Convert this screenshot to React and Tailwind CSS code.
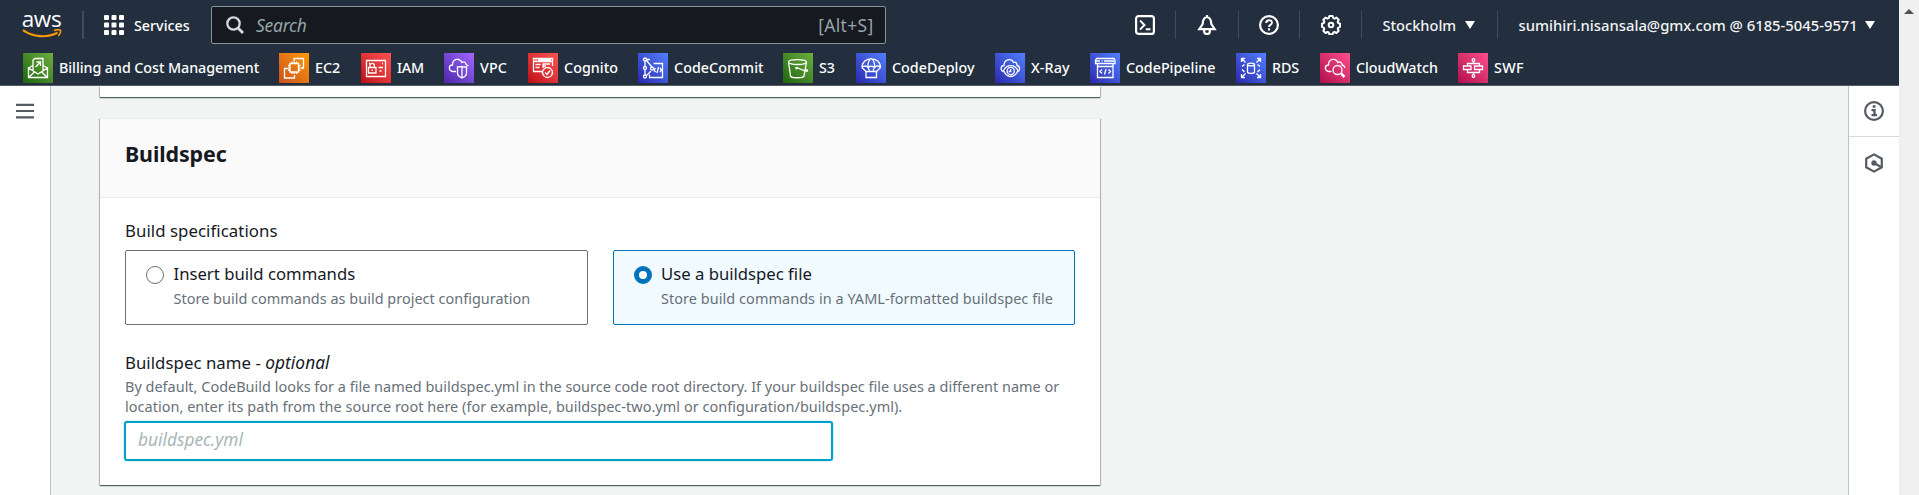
import React from "react";

const GRADIENTS = {
  green: "from-[#1b660f] to-[#6cae3e]",
  orange: "from-[#c8511b] to-[#ff9900]",
  red: "from-[#bd0816] to-[#ff5252]",
  purple: "from-[#4d27a8] to-[#a166ff]",
  blue: "from-[#2e27ad] to-[#527fff]",
  pink: "from-[#b0084d] to-[#ff4f8b]",
};

const SERVICES = [
  {
    name: "Billing and Cost Management", color: "green", width: "w-[256px]", text: "tracking-[-0.06px]",
    icon: <path d="M10 17V7l2-1.500h8V17M5.500 15v9.500h19V15L15 21zM5.500 24.500l6-5.500M24.500 24.500l-6-5.500M10 12.500L5.500 15M20 12.500l4.500 2.500M12.500 14l4.500-4.500M13.500 9h4v4" />,
  },
  {
    name: "EC2", color: "orange", width: "w-[82px]", text: "tracking-[0px]",
    icon: <path d="M15 8V5.500h9.500v9.500H22M9 15.500H5.500v9.500h10v-3M11 10.500h8.500v8.500H11zM13 8.500v2M15.200 8.500v2M17.500 8.500v2M13 19v2M15.200 19v2M17.500 19v2M9 12.500h2M9 14.800h2M9 17h2M19.500 12.500h2M19.500 14.800h2M19.500 17h2" />,
  },
  {
    name: "IAM", color: "red", width: "w-[83px]", text: "tracking-[-0.2px]",
    icon: <path d="M5.500 7.500h19v16h-19zM8 10.500h1M21 10.500h1M7.500 14.500h7.500v5.500H7.500zM9 14.500v-2a2.200 2.200 0 0 1 4.400 0v2M11.200 16.500v1.500M17.500 14.500h4.500M18.500 18h2" />,
  },
  {
    name: "VPC", color: "purple", width: "w-[84px]", text: "tracking-[0.1px]",
    icon: <path d="M12 18.500H9C4 17.500 4.500 12 8.500 12C8.500 5.500 16 4.500 18 9.500C20 8 22 9.500 22 11.500L24.500 13M18 13.500c2 .8 3.500 .500 4.500 .300V20c0 2.500-2 4-4.500 5c-2.500-1-4.500-2.500-4.500-5v-6.200c1.500 .2 3 0 4.500-.300zM18 13.500V25" />,
  },
  {
    name: "Cognito", color: "red", width: "w-[110px]", text: "tracking-[0.05px]",
    icon: <path d="M14 18.500H5.500v-13h19V13M5.500 8.500h19M7.500 7h1M10 7h13M7.500 11.500h5M7.500 14.500h4M15 15v-4h7M15 13h3M19.500 14.500a5 5 0 1 1-.01 0zM17 19.500l2 2l3-4" />,
  },
  {
    name: "CodeCommit", color: "blue", width: "w-[145px]", text: "tracking-[0.05px]",
    icon: (
      <>
        <path d="M7 8v5M7 17v5M8 7l6 7M8 23l5-5M9 8.500v-2h3M15.500 10.500h9v14h-13v-3M17.500 15l-1.500 2l1.500 2M22 15l1.500 2l-1.500 2M20.500 14l-1.500 6" />
        <circle cx="7" cy="6.500" r="1.500" /><circle cx="7" cy="15" r="1.500" /><circle cx="7" cy="23.500" r="1.500" /><circle cx="14" cy="15.500" r="1.500" />
      </>
    ),
  },
  {
    name: "S3", color: "green", width: "w-[73px]", text: "tracking-[0px]",
    icon: <path d="M5.500 9c0-3.300 18-3.300 18 0s-18 3.300-18 0l2 14c.5 2.300 13 2.300 13.500 0l2.500-14M14 14.500c4 2 8 4 10.500 3.500c.5-.8-1-1.500-2.500-2.200M13.500 14.300a.8 .8 0 1 0 .01 0z" />,
  },
  {
    name: "CodeDeploy", color: "blue", width: "w-[139px]", text: "tracking-[0.03px]",
    icon: <path d="M6 14.500C6 3 24.500 3 24.500 14.500L20.500 18.500M6 14.500l4 4M6 14.500c2-2 4-2 6 0c2-1.500 4.500-1.500 6.500 0c2-2 4-2 6 0M12 14.500c-.5-4 1-8 3.200-9c2.300 1 3.800 5 3.300 9M12 14.500l1.500 3M18.500 14.500l-1.500 3M10 18.500h10.500v6H10z" />,
  },
  {
    name: "X-Ray", color: "blue", width: "w-[95px]", text: "tracking-[0.1px]",
    icon: (
      <>
        <path d="M8.500 18.500C5 18 5.500 12.500 9 12.500C9 6 16.500 5 18.500 9.500C21 8.500 22 10 22 12.500C25.500 13 25 18 22.800 18.500" />
        <path d="M8.500 17.500c3.500-6.500 11-6.500 14.500 0c-3.500 8-11 8-14.500 0z" />
        <circle cx="15.700" cy="18" r="3.600" /><path d="M15.700 16v2.500h-2" />
      </>
    ),
  },
  {
    name: "CodePipeline", color: "blue", width: "w-[146px]", text: "tracking-[0px]",
    icon: <path d="M6.500 5.500h17.500l1 2v3h-19.500v-3zM6 8h4M11.500 8h1M14 8h10M7.500 10.500v14h15.500v-14M7.500 13.500h15.500M12 16.500l-2 2l2 2M18.500 16.500l2 2l-2 2M16 16l-1.500 5.500" />,
  },
  {
    name: "RDS", color: "blue", width: "w-[84px]", text: "tracking-[-0.1px]",
    icon: <path d="M5.500 9V5.500h3.500M5.500 5.500l4 4M21 5.500h3.500V9M24.500 5.500l-4 4M5.500 21v3.500h3.500M5.500 24.500l4-4M24.500 21v3.500H21M24.500 24.500l-4-4M11.500 11.500c0-1.800 7-1.800 7 0s-7 1.800-7 0v7.500c0 1.800 7 1.800 7 0v-7.500M8.500 11.500l-2.500 2M6 16.500l2.500 2.500M21.500 11.500l2.500 2M24 16.500l-2.500 2.500" />,
  },
  {
    name: "CloudWatch", color: "pink", width: "w-[138px]", text: "tracking-[-0.05px]",
    icon: (
      <>
        <path d="M11.500 18.500H9C4 17.500 4.500 12 8.500 12C8.500 5.500 16 4.500 18 9.500C20.500 8 22 10 22 12C24 12.300 25 14 24.500 15" />
        <circle cx="17.500" cy="17" r="4.500" /><path d="M20.500 20.500l3 3.500l1-1l-3.200-3.300" />
      </>
    ),
  },
  {
    name: "SWF", color: "pink", width: "w-[80px]", text: "tracking-[0.4px]",
    icon: (
      <>
        <path d="M15.500 8.500v2M9.500 13v-2.500h12V13M5.500 13h7.500v3.500H5.500zM16.500 13h8v3.500h-8zM9.500 16.500v3h12v-3M15.500 19.500v2" />
        <circle cx="15.500" cy="7" r="1.300" /><circle cx="15.500" cy="23" r="1.300" />
      </>
    ),
  },
];

function Divider({ className }) {
  return <span className={`h-7 w-px shrink-0 bg-[#414d5c] ${className}`} />;
}

function Caret({ className }) {
  return (
    <svg viewBox="0 0 10 8" className={`h-2 w-2.5 shrink-0 ${className}`} fill="#fff">
      <path d="M0 0h10L5 8z" />
    </svg>
  );
}

function ToolIcon({ className, children }) {
  return (
    <svg viewBox="0 0 20 20" fill="none" stroke="#fff" strokeWidth="2.200" className={`size-5 shrink-0 ${className}`}>
      {children}
    </svg>
  );
}

function AwsLogo() {
  return (
    <div className="flex w-10 shrink-0 flex-col items-center pb-[2px]">
      <span className="h-[19px] font-['Open_Sans',sans-serif] text-[22.500px] leading-[17px] font-medium tracking-[-0.4px] text-white">aws</span>
      <svg viewBox="0 0 40 10" className="h-2.5 w-10" fill="none" stroke="#ff9900">
        <path d="M1 1.200C11 8.500 25 9 35.500 3.800" strokeWidth="2.200" />
        <path d="M32 1.500c3-1 5.500-.9 6.300-.3c.5 1-.2 3.800-2 5.800" strokeWidth="1.500" />
      </svg>
    </div>
  );
}

function TopBar() {
  return (
    <div className="flex h-[50px] items-center pl-[21.500px]">
      <AwsLogo />
      <span className="ml-5 h-7 w-0.5 shrink-0 bg-[#414d5c]" />
      <svg viewBox="0 0 20 20" className="ml-5 size-5 shrink-0" fill="#fff">
        {[0, 7.5, 15].map((y) => [0, 7.5, 15].map((x) => <rect key={`${x}-${y}`} x={x} y={y} width="5" height="5" rx="1" />))}
      </svg>
      <span className="ml-[10.500px] w-[77px] shrink-0 pt-px text-[14.300px] font-medium text-white">Services</span>
      <div className="flex h-[38px] w-[675px] shrink-0 items-center rounded-[2px] border border-[#879596] bg-[#16191f] pr-[11.500px] pl-3.5 text-[#95a5a6]">
        <svg viewBox="0 0 18 18" className="size-[18px]" fill="none" stroke="#d5dbdb" strokeWidth="2.300">
          <circle cx="7.500" cy="7.500" r="6.200" />
          <path d="M12 12l5 5" strokeWidth="2.800" />
        </svg>
        <span className="ml-3 text-[17.400px] tracking-[-0.2px] italic">Search</span>
        <span className="ml-auto text-[17.400px] tracking-[0.35px]">[Alt+S]</span>
      </div>
      <ToolIcon className="ml-[248.500px]">
        <rect x="1.100" y="1.100" width="17.800" height="17.800" rx="2.500" />
        <path d="M5 5.500l4.500 4.500L5 14.500M10.800 14.200h4.700" strokeWidth="1.900" />
      </ToolIcon>
      <Divider className="ml-5" />
      <ToolIcon className="ml-[21px]">
        <path d="M10 2C6.500 2.500 5.800 5 5.700 9L2.300 14.200h15.400L14.300 9C14.200 5 13.500 2.500 10 2zM10 0v2" />
        <path d="M7.200 15v1.500a2.800 2.500 0 0 0 5.600 0V15" />
      </ToolIcon>
      <Divider className="ml-[21px]" />
      <ToolIcon className="ml-5">
        <circle cx="10" cy="10" r="8.900" />
        <path d="M7.200 8c0-3.800 5.800-3.500 5.700-.3c0 2.200-2.900 2.100-2.900 4.200" strokeWidth="1.900" />
        <path d="M10 13.300v2.200" strokeWidth="2.200" />
      </ToolIcon>
      <Divider className="ml-5" />
      <ToolIcon className="ml-[21px]">
        <path d="M8.400 1.100h3.200l.7 2l1.200.5l2-1l2.200 2.200l-1 2l.5 1.200l1.800.7v3.200l-1.800.7l-.5 1.200l1 2l-2.200 2.200l-2-1l-1.200.5l-.7 1.800H8.400l-.7-1.800l-1.200-.5l-2 1l-2.200-2.200l1-2l-.5-1.200l-1.800-.7V8.700l1.800-.7l.5-1.200l-1-2l2.200-2.200l2 1l1.200-.5z" strokeLinejoin="round" strokeWidth="2" />
        <circle cx="10" cy="10" r="2.300" strokeWidth="2" />
      </ToolIcon>
      <Divider className="ml-5" />
      <span className="ml-[21px] w-[74px] shrink-0 pt-px text-[14.600px] font-medium whitespace-nowrap text-[#f2f3f3]">Stockholm</span>
      <Caret className="ml-[8px]" />
      <Divider className="ml-[22px]" />
      <span className="ml-[21px] w-[339px] shrink-0 pt-px text-[14.800px] font-medium whitespace-nowrap text-[#f2f3f3]">
        sumihiri.nisansala@gmx.com @ 6185-5045-9571
      </span>
      <Caret className="ml-[7px]" />
    </div>
  );
}

function FavoritesBar() {
  return (
    <div className="flex h-[35px] items-start pt-[3px] pl-[23px]">
      {SERVICES.map((s) => (
        <div key={s.name} className={`flex shrink-0 items-center gap-1.5 ${s.width}`}>
          <svg viewBox="0 0 30 30" className={`size-[30px] shrink-0 bg-linear-to-tr ${GRADIENTS[s.color]}`} fill="none" stroke="#fff" strokeWidth="1.300">
            {s.icon}
          </svg>
          <span className={`text-[14.300px] font-medium whitespace-nowrap text-white ${s.text}`}>{s.name}</span>
        </div>
      ))}
    </div>
  );
}

const CARD_SHADOW = "shadow-[0_1px_1px_0_rgba(0,28,36,0.5),1px_1px_1px_0_rgba(0,28,36,0.2),-1px_1px_1px_0_rgba(0,28,36,0.2)]";

function Option({ selected, title, text, className }) {
  return (
    <div className={`flex h-[75px] rounded-[2px] border pt-[12px] ${selected ? "border-[#0073bb] bg-[#f1faff] pl-[19.500px]" : "border-[#687078] bg-white pl-5"} ${className}`}>
      <span className={`mt-[2.500px] size-[18px] shrink-0 rounded-full bg-white ${selected ? "border-[5px] border-[#0073bb]" : "border border-[#687078]"}`} />
      <div className="ml-[9.500px] whitespace-nowrap">
        <div className="text-[16.700px] leading-[22px] text-[#16191f]">{title}</div>
        <div className={`mt-[4px] text-[14.450px] leading-5 text-[#687078] ${selected ? "tracking-[0.065px]" : "tracking-[0.02px]"}`}>{text}</div>
      </div>
    </div>
  );
}

function BuildspecCard() {
  return (
    <section className={`mt-[21px] h-[367px] bg-white ${CARD_SHADOW}`}>
      <header className="flex h-[80px] items-center border-y border-[#eaeded] bg-[#fafafa] pb-[7px] pl-[25px]">
        <h2 className="text-[21.400px] font-bold tracking-[-0.1px] text-[#16191f]">Buildspec</h2>
      </header>
      <div className="pt-[22px] pl-[25px] text-[#16191f]">
        <div className="text-[16.800px] leading-[22px] tracking-[0.06px]">Build specifications</div>
        <div className="mt-[8px] flex gap-[25px]">
          <Option className="w-[463px]" title="Insert build commands" text="Store build commands as build project configuration" />
          <Option className="w-[462px]" selected title="Use a buildspec file" text="Store build commands in a YAML-formatted buildspec file" />
        </div>
        <div className="mt-[27px] text-[16.800px] leading-[22px] tracking-[0.04px]">
          Buildspec name - <i className="text-[17.300px]">optional</i>
        </div>
        <div className="mt-[3px] text-[14.450px] leading-5 tracking-[0.015px] whitespace-nowrap text-[#687078]">
          By default, CodeBuild looks for a file named buildspec.yml in the source code root directory. If your buildspec file uses a different name or
          <br />
          <span className="tracking-[0.045px]">location, enter its path from the source root here (for example, buildspec-two.yml or configuration/buildspec.yml).</span>
        </div>
        <input
          placeholder="buildspec.yml"
          className="mt-[4px] -ml-px block h-10 w-[709px] rounded-[3px] border-2 border-[#00a1c9] bg-white px-3 pb-[3px] text-[17.300px] shadow-[0_0_0_1px_rgba(0,161,201,0.15)] placeholder:text-[#aab7b8] placeholder:italic"
        />
      </div>
    </section>
  );
}

export default function App() {
  return (
    <div className="flex h-[495px] w-[1919px] overflow-hidden bg-[#f2f3f3] font-['Noto_Sans',sans-serif]">
      <div className="flex w-[1899px] flex-col">
        <nav className="h-[86px] shrink-0 border-b border-[#545b64] bg-[#232f3e]">
          <TopBar />
          <FavoritesBar />
        </nav>
        <div className="flex min-h-0 flex-1">
          <aside className="w-[51px] shrink-0 border-r border-[#bcc5c6] bg-white pt-[17px] pl-4">
            <svg viewBox="0 0 18 16" className="h-4 w-[18px]" fill="none" stroke="#545b64" strokeWidth="2.200">
              <path d="M0 1.800h18M0 8h18M0 14.400h18" />
            </svg>
          </aside>
          <main className="min-w-0 flex-1 pl-[49px]">
            <div className="w-[1000px]">
              <div className={`h-[11px] bg-white ${CARD_SHADOW}`} />
              <BuildspecCard />
            </div>
          </main>
          <aside className="w-[51px] shrink-0 border-l border-[#bcc5c6] bg-white">
            <div className="flex h-[51px] items-center justify-center border-b border-[#d5dbdb]">
              <svg viewBox="0 0 20 20" className="size-5" fill="none" stroke="#545b64" strokeWidth="2.200">
                <circle cx="10" cy="10" r="8.900" />
                <path d="M8.700 5.500h2.800M7.500 9.200h3v4.500M7.500 14.200h5.500" strokeWidth="2.300" />
              </svg>
            </div>
            <div className="flex h-[51px] items-center justify-center">
              <svg viewBox="0 0 20 20" className="size-5" fill="none" stroke="#545b64" strokeWidth="2.200">
                <path d="M10 1.400l7.800 4.300v8.600L10 18.600l-7.800-4.300V5.700z" />
                <circle cx="10" cy="10" r="2.700" fill="#545b64" stroke="none" />
                <path d="M10 10l7 4" />
              </svg>
            </div>
          </aside>
        </div>
      </div>
      <div className="flex w-5 shrink-0 justify-center bg-[#f0f0f0] pt-[9px]">
        <svg viewBox="0 0 10 5" className="h-[5px] w-2.5" fill="#505050">
          <path d="M5 0l5 5H0z" />
        </svg>
      </div>
    </div>
  );
}
